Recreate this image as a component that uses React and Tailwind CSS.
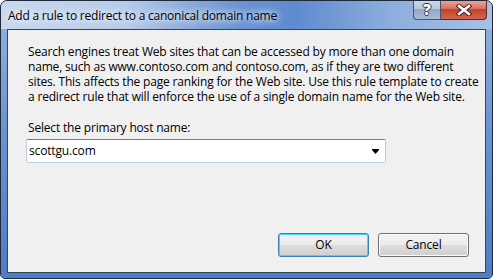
import React from 'react';

const font = "font-['Segoe_UI','Open_Sans',sans-serif]";

const CaptionButtons = () => (
  <div className="flex -mt-px mr-[5px] self-start">
    <div className="w-[28px] h-[20px] rounded-bl-[4px] border border-t-0 border-[#3d5777] bg-[linear-gradient(to_bottom,#cfdbec_0%,#b6c7df_45%,#90a7c8_50%,#a8bcd9_100%)] flex items-center justify-center">
      <span className={`${font} text-[15px] font-extrabold leading-none text-white [text-shadow:1px_0_0_#2a3b52,-1px_0_0_#2a3b52,0_1px_0_#2a3b52,0_-1px_0_#2a3b52]`}>?</span>
    </div>
    <div className="w-[46px] h-[20px] rounded-br-[4px] border border-t-0 border-l-0 border-[#5a2a26] bg-[linear-gradient(to_bottom,#e9a99c_0%,#d9725f_45%,#c6402a_50%,#d2664f_100%)] flex items-center justify-center">
      <svg width="16" height="12" viewBox="0 0 16 12">
        <path d="M3 2 L13 10 M13 2 L3 10" stroke="#3b1f1c" strokeWidth="4.5" strokeLinecap="square" />
        <path d="M3 2 L13 10 M13 2 L3 10" stroke="#ffffff" strokeWidth="2.6" strokeLinecap="square" />
      </svg>
    </div>
  </div>
);

const Button = ({ children, primary }) => (
  <button
    className={`w-[91px] h-[24px] rounded-[3px] border ${
      primary
        ? 'border-[#3c7fb1] shadow-[inset_0_0_0_1px_#48d4f7]'
        : 'border-[#707070] shadow-[inset_0_0_0_1px_#fcfcfc]'
    } bg-[linear-gradient(to_bottom,#f2f2f2_0%,#ebebeb_50%,#dddddd_51%,#cfcfcf_100%)] ${font} text-[12px] tracking-[-0.16px] text-black`}
  >
    {children}
  </button>
);

export default function App() {
  return (
    <div className="w-[494px] h-[280px] bg-white">
      <div className="w-[493px] h-[279px] border border-[#1e2a3a] rounded-t-[7px] rounded-b-[5px] overflow-hidden flex flex-col bg-[#5d88c8]">
        <div className="h-[28px] flex items-start justify-between bg-[linear-gradient(to_right,#c8d8ee_0%,#b7cce9_25%,#6b94d2_48%,#5f8bcf_60%,#8eaedd_80%,#a7c0e4_100%)]">
          <div className={`${font} text-[12px] tracking-[-0.22px] whitespace-nowrap text-black pl-[7px] pt-[7px] leading-[16px] [text-shadow:0_0_6px_#ffffff,0_0_10px_#ffffff]`}>
            Add a rule to redirect to a canonical domain name
          </div>
          <CaptionButtons />
        </div>
        <div className="flex-1 px-[6px] pb-[5px] bg-[linear-gradient(to_bottom,#8eaedd_0%,#6a93d0_40%,#4f7cc4_100%)]">
          <div className="h-full border border-[#34465e] bg-[#f0f0f0] flex flex-col">
            <div className={`${font} text-[12px] leading-[15px] tracking-[-0.18px] whitespace-nowrap text-black pl-[20px] pt-[14px]`}>
              <p>Search engines treat Web sites that can be accessed by more than one domain</p>
              <p>name, such as www.contoso.com and contoso.com, as if they are two different</p>
              <p>sites. This affects the page ranking for the Web site. Use this rule template to create</p>
              <p>a redirect rule that will enforce the use of a single domain name for the Web site.</p>
              <p className="mt-[16px]">Select the primary host name:</p>
            </div>
            <div className="ml-[18px] mt-[4px] w-[360px] h-[24px] bg-white border border-[#b5cfe7] border-t-[#5a7fa9] rounded-[2px] flex items-center justify-between pl-[2px] pr-[6px]">
              <span className={`${font} text-[12px] tracking-[-0.16px] text-black`}>scottgu.com</span>
              <svg width="7" height="5" viewBox="0 0 7 5">
                <rect x="0" y="0" width="7" height="1" fill="#000" />
                <polygon points="0,1 7,1 3.5,5" fill="#000" />
              </svg>
            </div>
            <div className="mt-auto flex justify-end gap-[9px] pr-[16px] pb-[15px]">
              <Button primary>OK</Button>
              <Button>Cancel</Button>
            </div>
          </div>
        </div>
      </div>
    </div>
  );
}
